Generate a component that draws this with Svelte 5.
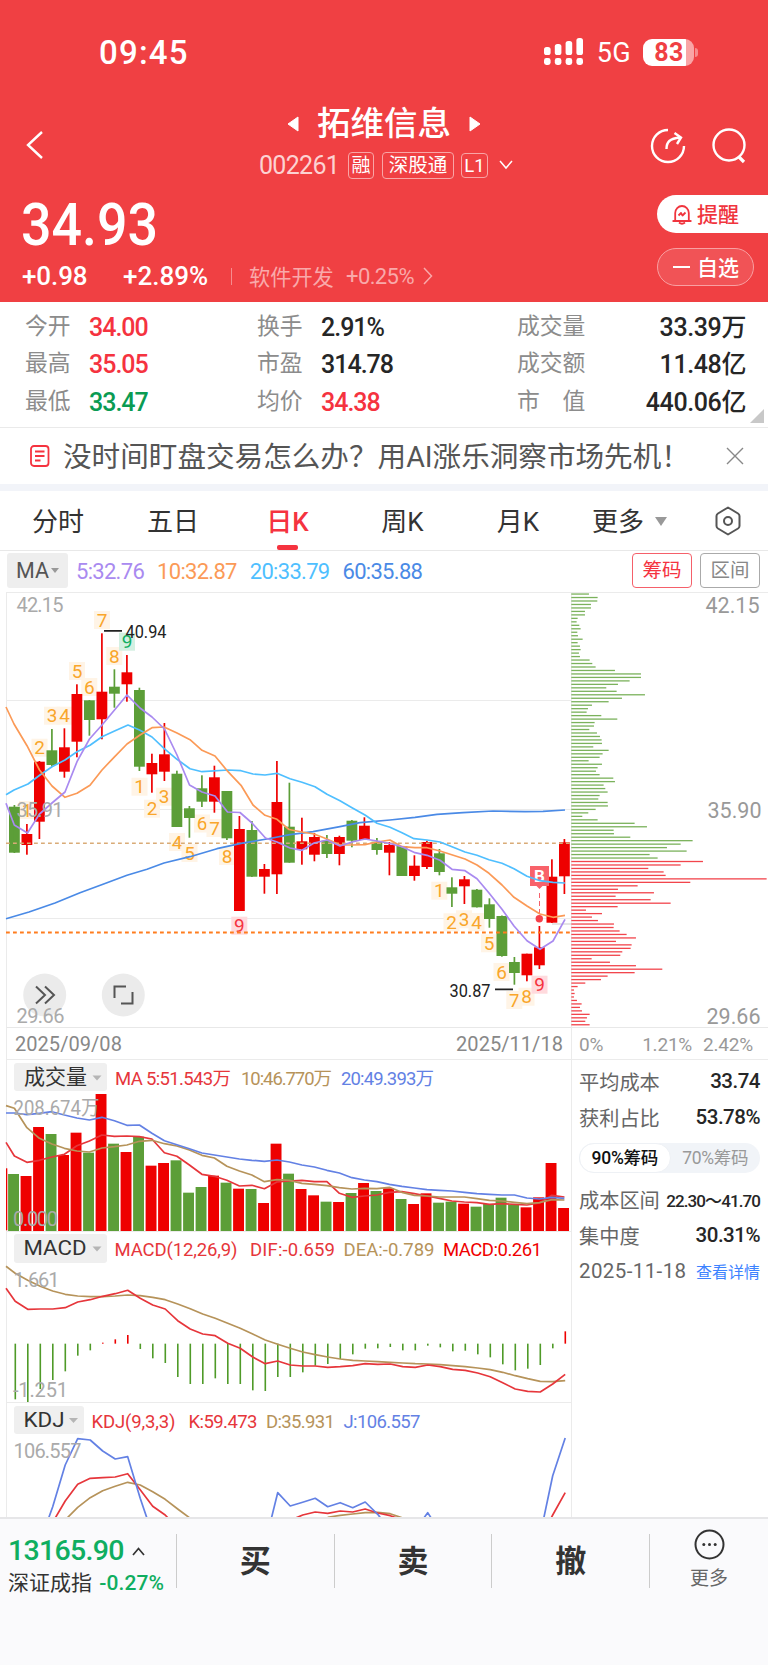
<script>
  // Header quote data
  const quotes = [
    { label: '今开', value: '34.00', tone: 'up' },
    { label: '换手', value: '2.91%' },
    { label: '成交量', value: '33.39万' },
    { label: '最高', value: '35.05', tone: 'up' },
    { label: '市盈', value: '314.78' },
    { label: '成交额', value: '11.48亿' },
    { label: '最低', value: '33.47', tone: 'down' },
    { label: '均价', value: '34.38', tone: 'up' },
    { label: '市　值', value: '440.06亿' }
  ];

  const tabs = ['分时', '五日', '日K', '周K', '月K'];
  let activeTab = '日K';
  let range = '90';

  const step = 12.5;
  const colX = (i) => 14.4 + i * step;

  // Candles: [rising, body top, body bottom, high, low]
  const candles = [
    [0, 806.7, 852.7, 805, 853], [1, 834, 845, 824, 854.7], [1, 761.7, 821.7, 761, 839],
    [0, 750.3, 765, 729, 767], [1, 747.3, 771.7, 728.3, 777.7], [1, 694, 741.7, 684.3, 757.3],
    [0, 700.3, 720, 700, 735.7], [1, 691.7, 719.3, 633.3, 739.3], [0, 686.7, 693.7, 669.3, 707.7],
    [1, 672.3, 684.3, 655, 701.7], [0, 690, 766.7, 687.7, 771], [1, 763, 774.3, 753.7, 792.7],
    [1, 754.3, 771.7, 723, 781], [0, 773.7, 827, 770.7, 827], [0, 808.3, 818, 806, 837.7],
    [0, 788.3, 801.7, 775.3, 807], [1, 777.3, 801.7, 765.7, 812.7], [0, 791, 838.3, 791, 840],
    [1, 829, 911, 816, 911], [0, 830, 876.7, 821, 877], [1, 869, 876.7, 864, 893.7],
    [1, 802, 874.3, 761, 894], [0, 826.7, 862.7, 782.7, 862.7], [1, 841.3, 849.3, 817.7, 864.7],
    [1, 837, 854.7, 833, 861.3], [0, 840.7, 854, 835, 858], [1, 837, 854, 835.7, 865.3],
    [0, 820.7, 840.7, 820, 847.3], [1, 825.7, 840, 817.3, 840], [0, 841.7, 850, 838, 854.7],
    [1, 845, 852.7, 842, 875.3], [0, 846, 876, 846, 876], [1, 865.7, 876, 855.3, 880.7],
    [1, 842, 867, 840.7, 869], [0, 853.3, 872, 849, 875.3], [0, 887.3, 893.7, 877.3, 907],
    [1, 879.3, 886.3, 876, 904], [0, 889.7, 907.3, 889, 907.5], [0, 904.3, 919, 898.3, 927.7],
    [0, 916, 956, 915.5, 956.7], [0, 962, 973, 957, 984.7], [1, 953.7, 975.3, 953.7, 981.3],
    [1, 947.3, 965.3, 926, 969], [1, 876.7, 922.7, 859.3, 923], [1, 842.3, 876.3, 839, 894]
  ];

  const maLines = [
    {
      color: '#4a8ae6',
      points: '6,918.7 29,912 55,903 80,892.7 103,884.3 127,875.3 147,869.3 164,863 190,856.7 217,848.7 241,843.3 267,839 290,834.7 313,831.7 340,826.7 360,822.7 390,820 415,817.3 437,814.3 463,812.7 493,811 525,811.7 543,811.3 565,810'
    },
    {
      color: '#4fbfff',
      points: '6,794.7 14,790 28,784 40,775 52,766.7 65,760 77,751.7 90,745.3 102,736.7 114,731.3 128,725 140,730.3 152,737 164,748.3 177,759.3 190,768.7 202,771.7 228,770 241,770.7 253,774 265,775 277,773.3 290,778.7 302,782.3 315,786.7 327,794.3 340,800.7 352,807.7 365,815 377,823.3 390,827.3 402,832.7 414,838.7 427,840 440,842 452,846.7 465,852 477,855.3 489,859.7 502,863.3 514,868.7 527,876.3 540,880.7 553,882.3 565,883'
    },
    {
      color: '#fb9a57',
      points: '6,707 14,724 27,745.7 39.5,770 52,786 65,797.3 77,793.3 90,785.3 102,770 114,757.3 127,744 140,735 152,727.7 164,727 177,733 190,739.7 202,750.3 215,756 228,771.7 241,785.3 253,805 265,815.3 277,819.3 289,829.5 302,832 314,834 327,839 340,845 352,845 365,844.7 377,842 390,840 402,846.7 415,847.7 427,847.7 440,851 465,859 477,865 489,873.3 502,885 514,897.3 527,906 540,914 553,917.3 565,915.3'
    },
    {
      color: '#a98af0',
      points: '6,803.3 14.3,825 27.5,833 39.5,814 52,803 65,792 77,761.7 89.5,739 102,725 114.5,710 127,695 140,708 152,717 164.5,729 177,755 189.5,785 202,792 215,796 227.5,812 240,812.5 252,823 265.5,838 277,842 290,848 302,850.3 314,843 327,840 340,846 352,842 365,839 377,841 390,843.5 402,846.7 415,852.7 427,855.3 440,860.3 452,869.3 465,870.7 477,878.7 489,893 502,909.3 514,926 527,940.7 540,949.3 553,941 565,919.3'
    }
  ];

  // Nine-turn markers: [digit, x, y, tone]
  const turns = [
    [1, 27, 810], [2, 39.5, 747.7], [3, 52, 715.7], [4, 64.5, 715.7], [5, 77, 671], [6, 89.3, 687],
    [7, 102, 620], [8, 114.3, 656], [9, 127, 641.7, 'green'],
    [1, 139.5, 786.7], [2, 152, 808.7], [3, 164, 796.7], [4, 177, 842], [5, 189.5, 853],
    [6, 202, 823.5], [7, 214.5, 828], [8, 227, 856], [9, 239.3, 925.7, 'red'],
    [1, 439.3, 890.7], [2, 451.5, 922.3], [3, 464, 919.3], [4, 476.5, 922], [5, 489, 943.3],
    [6, 501.5, 972], [7, 514.3, 1000], [8, 526.5, 996.7], [9, 539.5, 984.7, 'red']
  ];

  // Chip distribution, widths in thirds of a pixel
  const chips = [
    87, 113, 112, 93, 93, 75, 75, 53, 50, 58, 62, 52, 54, 68, 53, 60, 62, 57, 60, 89, 97, 107, 165,
    243, 243, 209, 174, 139, 170, 255, 186, 146, 96, 84, 80, 124, 172, 104, 102, 88, 111, 120, 125,
    126, 100, 146, 128, 119, 86, 126, 113, 108, 119, 160, 165, 131, 136, 143, 119, 115, 143, 144,
    107, 85, 67, 113, 224, 261, 161, 162, 211, 398, 362, 321, 380, 269, 293, 429, 362, 265, 311,
    317, 620, 391, 233, 174, 282, 167, 272, 332, 173, 78, 126, 96, 114, 162, 161, 179, 200, 228,
    168, 215, 212, 187, 181, 95, 150, 228, 307, 224, 143, 123, 76, 53, 42, 44, 42, 51, 65, 60, 66,
    89, 81, 76, 89
  ];
  const profitStart = 77;

  const volumes = [
    357, 363, 216, 237, 300, 233, 293, 117, 266, 291, 245, 332, 324, 316, 413, 396, 362, 383, 401,
    402, 444, 266, 356, 402, 421, 440, 441, 414, 384, 408, 400, 432, 447, 415, 443, 440, 446, 455,
    447, 428, 449, 457, 427, 324, 459
  ];
  const volMa = [
    {
      color: '#e6363b',
      start: 262,
      data: [303, 322, 316, 306, 298, 272, 258, 240, 244, 243, 245, 252, 293, 304, 330, 358, 364, 376, 393, 391, 401, 381, 378, 376, 380, 380, 415, 427, 423, 420, 412, 410, 416, 423, 430, 438, 441, 443, 448, 446, 448, 450, 444, 421, 426]
    },
    {
      color: '#b6935a',
      start: 152,
      data: [160, 218, 250, 267, 280, 288, 291, 279, 275, 270, 259, 256, 266, 273, 285, 301, 309, 334, 348, 360, 380, 374, 376, 385, 388, 392, 398, 402, 400, 401, 397, 412, 421, 423, 426, 426, 426, 431, 436, 438, 442, 446, 443, 434, 435]
    },
    {
      color: '#6381e4',
      start: 174,
      data: [174, 179, 175, 170, 180, 189, 195, 187, 197, 211, 210, 235, 257, 269, 281, 294, 300, 306, 312, 316, 319, 315, 321, 330, 336, 346, 354, 368, 375, 380, 388, 394, 399, 404, 406, 408, 412, 416, 418, 420, 420, 429, 432, 427, 430]
    }
  ];

  const hist = [
    343, 351, 312, 285, 259, 212, 196, 173, 163, 150, 192, 220, 234, 276, 297, 297, 280, 297, 297,
    316, 318, 276, 276, 262, 242, 237, 222, 208, 191, 190, 186, 196, 196, 182, 187, 199, 197, 208,
    217, 238, 256, 251, 240, 190, 139
  ];
  const dif = [49, 73, 72, 72, 68, 51, 44, 34, 26, 16, 40, 60, 72, 107, 132, 147, 152, 175, 190, 216, 236, 228, 240, 243, 243, 247, 245, 242, 236, 238, 237, 245, 247, 240, 245, 253, 256, 264, 275, 293, 312, 319, 321, 297, 268];
  const dea = [-35, -14, 4, 18, 28, 33, 35, 35, 33, 30, 32, 37, 44, 57, 71, 87, 100, 115, 130, 147, 165, 178, 190, 201, 209, 216, 222, 226, 228, 230, 232, 234, 236, 237, 239, 242, 245, 249, 254, 262, 272, 281, 289, 290, 287];

  // KDJ segments: first column index plus values
  const kdj = [
    { color: '#b6935a', from: 4, data: [705, 667, 638, 617, 604, 592, 600, 620, 643, 672, 700] },
    { color: '#b6935a', from: 25, data: [697, 691, 687, 683, 682, 686, 699] },
    { color: '#e6363b', from: 3, data: [712, 648, 598, 580, 578, 576, 566, 614, 664, 690, 730] },
    { color: '#e6363b', from: 22, data: [706, 690, 681, 685, 678, 681, 672, 684, 692, 705] },
    { color: '#e6363b', from: 42, data: [765, 690, 623] },
    { color: '#6381e4', from: 2, data: [770, 665, 540, 461, 465, 498, 522, 515, 640, 750] },
    { color: '#6381e4', from: 20, data: [775, 623, 663, 652, 640, 665, 653, 668, 651, 688, 735] },
    { color: '#6381e4', from: 32, data: [735, 683, 740] },
    { color: '#6381e4', from: 42, data: [750, 572, 459] }
  ];

  const line = (data, base, from = 0, dx = 0) =>
    data.map((v, i) => `${colX(i + from) + dx},${(base + v / 3).toFixed(1)}`).join(' ');
</script>

<div class="page">
  <header>
    <div class="status">
      <span class="clock">09:45</span>
      <div class="status-right">
        <svg width="40" height="28" viewBox="0 0 40 28" fill="#fff">
          {#each [9, 6, 3, 0] as top, i}
            <rect x={i * 10.8} y={top} width="6.6" height={17 - top} rx="2.6" />
            <rect x={i * 10.8} y="20" width="6.6" height="7" rx="2.4" />
          {/each}
        </svg>
        <span class="net">5G</span>
        <div class="battery"><span>83</span></div>
        <i class="nub"></i>
      </div>
    </div>

    <div class="title-bar">
      <svg class="back" width="20" height="32" viewBox="0 0 20 32">
        <path d="M17 3 L3 16 L17 29" />
      </svg>
      <div class="title">
        <div class="name">
          <svg width="12" height="16" viewBox="0 0 12 16"><path d="M11 1v14L1 8z" fill="#fff" stroke="#fff" stroke-linejoin="round" /></svg>
          <h1>拓维信息</h1>
          <svg width="12" height="16" viewBox="0 0 12 16"><path d="M1 1v14L11 8z" fill="#fff" stroke="#fff" stroke-linejoin="round" /></svg>
        </div>
        <div class="code">
          <span class="num">002261</span>
          <span class="tag">融</span>
          <span class="tag wide">深股通</span>
          <span class="tag l1">L1</span>
          <svg width="14" height="10" viewBox="0 0 14 10"><path d="M1 1l6 7 6-7" fill="none" stroke="#fff" stroke-width="1.5" /></svg>
        </div>
      </div>
      <div class="tools">
        <svg width="36" height="36" viewBox="0 0 36 36">
          <path d="M18 2A16 16 0 1 0 34 18" />
          <path d="M16.5 21c0-7 3-10.500 13.500-11.500M24.500 5l6.500 4.500-4 6.500" />
        </svg>
        <svg width="36" height="36" viewBox="0 0 36 36">
          <circle cx="18" cy="17" r="15.500" />
          <path d="M27.500 28.500L33 34" stroke-width="3.200" />
        </svg>
      </div>
    </div>

    <div class="price-area">
      <div>
        <div class="price">34.93</div>
        <div class="change">
          <span class="delta">+0.98</span>
          <span class="delta pct">+2.89%</span>
          <i></i>
          <span class="sector">软件开发</span>
          <span class="sector-pct">+0.25%</span>
          <svg width="10" height="18" viewBox="0 0 10 18"><path d="M1 1l7.500 8L1 17" fill="none" stroke="#f9a9aa" stroke-width="1.500" /></svg>
        </div>
      </div>
      <div class="pills">
        <button class="pill alert">
          <svg width="20" height="21" viewBox="0 0 20 21" fill="none" stroke="#f0343d" stroke-width="1.800" stroke-linejoin="round">
            <path d="M3.200 16V9a6.800 7 0 0 1 13.600 0v7l2 1H1.200zM7 18.500q3 2.500 6 0M6.500 11.500l2.500-2.500 1.500 2.500 3-3" />
          </svg>
          <span>提醒</span>
        </button>
        <button class="pill watch"><b></b><span>自选</span></button>
      </div>
    </div>
  </header>

  <section class="quotes">
    {#each quotes as q}
      <div class="quote">
        <span class="label">{q.label}</span>
        <span class={`value ${q.tone || ''}`}>{q.value}</span>
      </div>
    {/each}
    <i class="corner"></i>
  </section>

  <section class="notice">
    <svg width="20" height="23" viewBox="0 0 20 23" fill="none" stroke="#f5333f" stroke-width="1.800">
      <rect x="1" y="1" width="17.500" height="20" rx="3" />
      <path d="M5 6.500h9.500M5 11h9.500M5 15.500h5.500" />
    </svg>
    <p>没时间盯盘交易怎么办？用AI涨乐洞察市场先机！</p>
    <svg width="18" height="18" viewBox="0 0 18 18"><path d="M1 1l16 16M17 1L1 17" stroke="#888" stroke-width="1.400" /></svg>
  </section>

  <nav>
    {#each tabs as tab}
      <button class={`tab ${tab === activeTab ? 'active' : ''}`} on:click={() => (activeTab = tab)}>{tab}</button>
    {/each}
    <button class="more-tab">更多<i class="tri"></i></button>
    <svg width="28" height="30" viewBox="0 0 28 30" fill="none" stroke="#555" stroke-width="2">
      <path d="M14 1.500L24 7.500Q25.500 8.500 25.500 10v10Q25.500 21.500 24 22.500L14 28.500 4 22.500Q2.500 21.500 2.500 20V10Q2.500 8.500 4 7.500z" stroke-linejoin="round" />
      <circle cx="14" cy="15" r="4" />
    </svg>
  </nav>

  <section class="ma-row">
    <button class="ma-pick">MA<i class="tri small"></i></button>
    <span style="color: #a98af0">5:32.76</span>
    <span style="color: #fb9a57">10:32.87</span>
    <span style="color: #4fbfff">20:33.79</span>
    <span style="color: #4a8ae6">60:35.88</span>
    <div class="modes">
      <button class="on">筹码</button>
      <button>区间</button>
    </div>
  </section>

  <main>
    <div class="charts">
      <!-- Candlestick panel -->
      <svg width="571" height="435" viewBox="0 592 571 435">
        {#each [592.5, 700.5, 809.5, 918.5] as y}
          <path class="grid" d={`M6 ${y}H571`} />
        {/each}
        <path class="grid" d="M6.500 592V1027" />
        {#each turns as [n, x, y, tone]}
          <g class={`turn ${tone || ''}`}>
            <rect x={x - 8} y={y - 9} width="16" height="18" />
            <text {x} y={y + 6.5} text-anchor="middle">{n}</text>
          </g>
        {/each}
        <circle cx="44.700" cy="995" r="21.500" fill="#ebebeb" />
        <circle cx="123.300" cy="995" r="21.500" fill="#ebebeb" />
        <path d="M36 986.500l9 8.500-9 8.500M45 986.500l9 8.500-9 8.500" fill="none" stroke="#555" stroke-width="2" />
        <path d="M126 986.500h-11.500V998M132.500 992v11.500H121" fill="none" stroke="#555" stroke-width="2" />
        {#each candles as [up, top, bottom, high, low], i}
          <g fill={up ? '#ee0000' : '#5c9e38'}>
            <rect x={colX(i) - 5.4} y={top} width="10.800" height={bottom - top} />
            <rect x={colX(i) - 0.85} y={high} width="1.700" height={low - high} />
          </g>
        {/each}
        <path d="M6 843.300H571" stroke="#d9ab77" stroke-width="1.600" stroke-dasharray="3.800 3.200" />
        <path d="M6 932.500H571" stroke="#ff7d1e" stroke-width="1.800" stroke-dasharray="3.800 3.200" />
        <path d="M552 924H571" stroke="#ddd" stroke-width="1.500" />
        <g class="marker">
          <path d="M530 866h19v20h-6.500l-3 3-3-3H530z" fill="#f8626a" />
          <text x="539.500" y="882" text-anchor="middle">B</text>
          <path d="M539.500 893V913" stroke="#f5606a" stroke-dasharray="5 3" />
          <circle cx="539.300" cy="918.700" r="3.700" fill="#f5404a" />
        </g>
        {#each maLines as l}
          <polyline points={l.points} stroke={l.color} />
        {/each}
        <path d="M104 630.800H122M495 989.300H513" stroke="#222" stroke-width="1.800" />
        <text class="tip" x="125.500" y="637.500" textLength="41" lengthAdjust="spacingAndGlyphs">40.94</text>
        <text class="tip" x="449.500" y="996.500" textLength="41" lengthAdjust="spacingAndGlyphs">30.87</text>
        <text class="axis" x="16.500" y="612" textLength="47">42.15</text>
        <text class="axis" x="16.500" y="817" textLength="47">35.91</text>
        <text class="axis" x="16.500" y="1022.500" textLength="48">29.66</text>
      </svg>

      <div class="dates"><span>2025/09/08</span><span>2025/11/18</span></div>

      <!-- Volume panel -->
      <svg width="571" height="172" viewBox="0 1059 571 172">
        <path class="grid" d="M6.500 1059V1231M6 1059.500H571" />
        <rect class="pick" x="14" y="1063" width="93" height="28" rx="3" />
        <text class="pick-text" x="24" y="1083.500" textLength="63">成交量</text>
        <path class="arrow" d="M92.500 1075.500h9l-4.500 5z" />
        <g class="legend">
          <text x="115" y="1084.500" fill="#e6363b" textLength="116">MA 5:51.543万</text>
          <text x="241" y="1084.500" fill="#b6935a" textLength="91">10:46.770万</text>
          <text x="341" y="1084.500" fill="#6381e4" textLength="93">20:49.393万</text>
        </g>
        <rect x="6" y="1168.300" width="1.300" height="62" fill="#ee0000" />
        {#each volumes as v, i}
          <rect x={8.1 + i * step} y={1055 + v / 3} width="10.900" height={176.3 - v / 3} fill={candles[i][0] ? '#ee0000' : '#5c9e38'} />
        {/each}
        {#each volMa as l}
          <polyline points={`6,${1055 + l.start / 3} ${line(l.data, 1055)}`} stroke={l.color} />
        {/each}
        <text class="axis" x="13.500" y="1115" textLength="86" lengthAdjust="spacingAndGlyphs">208.674万</text>
        <text class="axis" x="13" y="1226" textLength="45">0.000</text>
      </svg>

      <!-- MACD panel -->
      <svg width="571" height="171" viewBox="0 1231 571 171">
        <path class="grid" d="M6.500 1231V1402M6 1231.500H571" />
        <rect class="pick" x="14" y="1234" width="93" height="29" rx="3" />
        <text class="pick-text" x="23.500" y="1255" textLength="63" lengthAdjust="spacingAndGlyphs">MACD</text>
        <path class="arrow" d="M92.500 1246.500h9l-4.500 5z" />
        <g class="legend">
          <text x="114.500" y="1256" fill="#e6363b" textLength="123">MACD(12,26,9)</text>
          <text x="250" y="1256" fill="#e6363b" textLength="85">DIF:-0.659</text>
          <text x="343.500" y="1256" fill="#b6935a" textLength="91">DEA:-0.789</text>
          <text x="443" y="1256" fill="#f00000" textLength="99">MACD:0.261</text>
        </g>
        {#each hist as v, i}
          <rect x={colX(i) + 0.1} y={1285 + Math.min(v, 176) / 3} width="1.600" height={Math.abs(v - 176) / 3} fill={v < 176 ? '#ee0000' : '#4f9a28'} />
        {/each}
        <polyline points={`6,1266.300 ${line(dea, 1285, 0, 0.8)}`} stroke="#b6935a" />
        <polyline points={`6,1288.300 ${line(dif, 1285, 0, 0.8)}`} stroke="#e6363b" />
        <text class="axis" x="13.500" y="1287" textLength="46">1.661</text>
        <text class="axis" x="13" y="1397" textLength="55">-1.251</text>
      </svg>

      <!-- KDJ panel -->
      <svg width="571" height="115" viewBox="0 1402 571 115">
        <path class="grid" d="M6.500 1402V1517M6 1402.500H571" />
        <rect class="pick" x="14" y="1406" width="70" height="28" rx="3" />
        <text class="pick-text" x="23.500" y="1426.500" textLength="41" lengthAdjust="spacingAndGlyphs">KDJ</text>
        <path class="arrow" d="M69 1418h9l-4.500 5z" />
        <g class="legend">
          <text x="91.500" y="1427.500" fill="#e6363b" textLength="84">KDJ(9,3,3)</text>
          <text x="188.500" y="1427.500" fill="#e6363b" textLength="69">K:59.473</text>
          <text x="266" y="1427.500" fill="#b6935a" textLength="69">D:35.931</text>
          <text x="343.500" y="1427.500" fill="#6381e4" textLength="77">J:106.557</text>
        </g>
        {#each kdj as l}
          <polyline points={line(l.data, 1285, l.from, 0.8)} stroke={l.color} />
        {/each}
        <text class="axis" x="13.500" y="1458" textLength="68">106.557</text>
      </svg>
    </div>

    <aside>
      <svg width="197" height="435" viewBox="571 592 197 435">
        <path class="grid" d="M571 592.500H768M571.500 592V1027" />
        {#each chips as c, i}
          <rect x="571.300" y={593.4 + i * 3.4735} width={(c - 34) / 3} height="1.300" fill={i < profitStart ? '#7bb25c' : '#f2454c'} />
        {/each}
        <text class="axis big" x="705.500" y="613" textLength="54">42.15</text>
        <text class="axis big" x="707.500" y="818" textLength="54">35.90</text>
        <text class="axis big" x="706.500" y="1023.500" textLength="54">29.66</text>
      </svg>
      <div class="scale"><span>0%</span><span>1.21%</span><span>2.42%</span></div>
      <div class="stats">
        <div class="stat"><span>平均成本</span><b>33.74</b></div>
        <div class="stat"><span>获利占比</span><b>53.78%</b></div>
        <div class="switch">
          <button class:on={range === '90'} on:click={() => (range = '90')}>90%筹码</button>
          <button class:on={range === '70'} on:click={() => (range = '70')}>70%筹码</button>
        </div>
        <div class="stat"><span>成本区间</span><b class="range">22.30～41.70</b></div>
        <div class="stat"><span>集中度</span><b>30.31%</b></div>
        <div class="stat"><span class="day">2025-11-18</span><a href="#detail">查看详情</a></div>
      </div>
    </aside>
  </main>

  <footer>
    <div class="index">
      <div class="index-value"><span>13165.90</span>
        <svg width="13" height="9" viewBox="0 0 13 9"><path d="M1 8l5.500-6.500L12 8" fill="none" stroke="#333" stroke-width="1.700" /></svg>
      </div>
      <div class="index-name">深证成指 <span>-0.27%</span></div>
    </div>
    <button class="trade">买</button>
    <button class="trade">卖</button>
    <button class="trade">撤</button>
    <button class="more">
      <svg width="31" height="31" viewBox="0 0 31 31">
        <circle cx="15.500" cy="15.500" r="14" fill="none" stroke="#333" stroke-width="2" />
        <circle cx="9.800" cy="15.500" r="1.500" /><circle cx="15.500" cy="15.500" r="1.500" /><circle cx="21.200" cy="15.500" r="1.500" />
      </svg>
      更多
    </button>
  </footer>
</div>

<style>
  .page {
    width: 768px;
    height: 1665px;
    overflow: hidden;
    background: #fff;
    color: #333;
    font-family: Roboto, "Noto Sans CJK SC", sans-serif;
  }

  svg {
    display: block;
    flex: none;
  }

  button {
    border: 0;
    padding: 0;
    margin: 0;
    background: none;
    color: inherit;
    font: inherit;
  }

  header {
    height: 302px;
    background: #f04043;
    color: #fff;
  }

  .status {
    height: 104px;
    box-sizing: border-box;
    padding: 33px 70px 0 99px;
    display: flex;
    justify-content: space-between;
    align-items: flex-start;
  }

  .clock {
    font-size: 33px;
    line-height: 40px;
    font-weight: 500;
    letter-spacing: 1.2px;
  }

  .status-right {
    display: flex;
    align-items: center;
    padding-top: 5px;
  }

  .net {
    margin: 2px 12px 0 13px;
    font-size: 27px;
    line-height: 26px;
    letter-spacing: 0.3px;
  }

  .battery {
    width: 51px;
    height: 27px;
    border-radius: 9px;
    background: linear-gradient(90deg, #fff 43px, #f9a5a6 43px);
    color: #f04043;
    font-size: 25px;
    line-height: 28px;
    font-weight: 700;
    text-align: center;
  }

  .battery span {
    letter-spacing: 0.5px;
    margin-left: 1px;
  }

  .nub {
    width: 3px;
    height: 9px;
    margin-left: 1px;
    border-radius: 0 3px 3px 0;
    background: #f78b8d;
  }

  .title-bar {
    height: 84px;
    display: grid;
    grid-template-columns: 180px 1fr 180px;
  }

  .back {
    margin: 25px 0 0 25px;
    fill: none;
    stroke: #fff;
    stroke-width: 2.4;
  }

  .name {
    display: flex;
    justify-content: center;
    align-items: center;
    gap: 18px;
    height: 39px;
  }

  h1 {
    margin: 0;
    font-size: 33.5px;
    line-height: 39px;
    font-weight: 500;
  }

  .code {
    display: flex;
    align-items: center;
    height: 28px;
    margin: 8px 0 0 79px;
  }

  .code .num {
    width: 89px;
    font-size: 25px;
    letter-spacing: -0.7px;
    line-height: 28px;
    padding-top: 2px;
    color: #fcd2d2;
  }

  .tag {
    box-sizing: border-box;
    width: 26px;
    height: 27px;
    margin-right: 8px;
    border: 1px solid #f9a5a6;
    border-radius: 4px;
    font-size: 19px;
    line-height: 25px;
    text-align: center;
  }

  .tag.wide {
    width: 72px;
    margin-right: 7px;
    font-size: 19.5px;
  }

  .tag.l1 {
    width: 27px;
    height: 25px;
    margin-right: 11px;
    line-height: 24px;
    font-size: 18.5px;
  }

  .tools {
    display: flex;
    gap: 25px;
    padding: 24px 0 0 62px;
  }

  .tools svg {
    fill: none;
    stroke: #fff;
    stroke-width: 2.4;
  }

  .price-area {
    height: 114px;
    display: flex;
    justify-content: space-between;
  }

  .price {
    margin: 4px 0 0 21px;
    height: 70px;
    width: 170px;
    font-size: 59px;
    line-height: 66px;
    font-weight: 500;
    transform: scaleX(0.91);
    transform-origin: left;
  }

  .change {
    display: flex;
    align-items: center;
    height: 28px;
    margin-left: 22px;
  }

  .delta {
    width: 101px;
    font-size: 26px;
    font-weight: 500;
    letter-spacing: -0.1px;
  }

  .delta.pct {
    width: 108px;
    letter-spacing: 0;
  }

  .change i {
    width: 1px;
    height: 17px;
    margin-right: 17px;
    background: #f68c8e;
  }

  .sector {
    width: 97px;
    margin-top: -2px;
    font-size: 21.2px;
    color: #f9a9aa;
  }

  .sector-pct {
    width: 77px;
    font-size: 22px;
    letter-spacing: -0.6px;
    color: #f9a9aa;
  }

  .pills {
    width: 111px;
    padding-top: 7px;
    display: flex;
    flex-direction: column;
    gap: 15px;
  }

  .pill {
    box-sizing: border-box;
    height: 38px;
    display: flex;
    align-items: center;
    font-size: 21px;
    font-weight: 500;
  }

  .pill span {
    margin-top: -3px;
  }

  .alert {
    padding-left: 15px;
    gap: 5px;
    border-radius: 19px 0 0 19px;
    background: #fff;
    color: #f0343d;
  }

  .watch {
    width: 97px;
    padding-left: 15px;
    gap: 7px;
    border: 1px solid #f9a0a2;
    border-radius: 19px;
    background: #f15356;
  }

  .watch b {
    width: 17px;
    height: 2px;
    background: #fff;
  }

  .quotes {
    position: relative;
    box-sizing: border-box;
    height: 126px;
    padding: 7px 22px 0 25px;
    border-bottom: 1px solid #eaeaea;
    display: grid;
    grid-template-columns: 232px 260px 1fr;
    grid-auto-rows: 37.5px;
  }

  .quote {
    display: flex;
    align-items: center;
  }

  .label {
    width: 64px;
    font-size: 22.8px;
    line-height: 32px;
    color: #8c8c8c;
    white-space: nowrap;
    margin-top: -2px;
  }

  .quote:nth-child(3n) {
    justify-content: space-between;
  }

  .value {
    font-size: 25px;
    line-height: 32px;
    font-weight: 500;
    letter-spacing: -1px;
    color: #262626;
  }

  .quote:nth-child(3n) .value {
    letter-spacing: -0.4px;
  }

  .value.up {
    color: #f5333f;
  }

  .value.down {
    color: #0a9b53;
  }

  .corner {
    position: absolute;
    right: 4px;
    bottom: 4px;
    border-left: 14px solid transparent;
    border-bottom: 14px solid #c8c8c8;
  }

  .notice {
    height: 56px;
    padding: 0 24px 0 30px;
    border-bottom: 7px solid #f2f4f9;
    display: flex;
    align-items: center;
  }

  .notice p {
    flex: 1;
    margin: 2px 0 0 13px;
    font-size: 28.6px;
    line-height: 40px;
    color: #555;
    white-space: nowrap;
  }

  nav {
    height: 59px;
    border-bottom: 1px solid #e8e8e8;
    display: grid;
    grid-template-columns: 116px 114px 115px 115px 116px 138px 28px;
    align-items: center;
    font-size: 26px;
  }

  .tab {
    position: relative;
    height: 59px;
    padding-bottom: 2px;
  }

  .tab.active {
    color: #f5333f;
    font-weight: 500;
  }

  .tab.active::after {
    content: "";
    position: absolute;
    left: 47px;
    bottom: 0;
    width: 21px;
    height: 5px;
    border-radius: 2px;
    background: #f5333f;
  }

  .more-tab {
    display: flex;
    align-items: center;
    padding: 0 0 2px 16px;
  }

  .tri {
    margin: 3px 0 0 11px;
    border: 6.5px solid transparent;
    border-top: 9px solid #999;
    border-bottom: 0;
  }

  .tri.small {
    margin: 0 0 0 2px;
    border-width: 5px 4.5px 0;
  }

  .ma-row {
    height: 41px;
    box-sizing: border-box;
    padding: 2px 8px 0 7px;
    display: flex;
    align-items: flex-start;
    font-size: 22px;
    line-height: 37px;
    letter-spacing: -0.7px;
  }

  .ma-row span {
    margin-right: 13px;
  }

  .ma-pick {
    width: 61px;
    height: 35px;
    margin-right: 8px;
    display: flex;
    align-items: center;
    justify-content: center;
    border-radius: 3px;
    background: #eee;
    color: #555;
    font-size: 21.5px;
    letter-spacing: 0;
  }

  .modes {
    margin-left: auto;
    display: flex;
    gap: 8px;
  }

  .modes button {
    box-sizing: border-box;
    width: 60px;
    height: 35px;
    border: 1px solid #aaa;
    border-radius: 4px;
    color: #888;
    font-size: 19.5px;
    line-height: 33px;
    letter-spacing: 0;
  }

  .modes .on {
    border-color: #f5606a;
    color: #f5333f;
  }

  main {
    display: flex;
    height: 925px;
  }

  .charts {
    width: 571px;
  }

  .grid {
    fill: none;
    stroke: #ebebeb;
  }

  polyline {
    fill: none;
    stroke-width: 1.7;
    stroke-linejoin: round;
  }

  .turn rect {
    fill: #fff4e6;
  }

  .turn text {
    fill: #f9a62b;
    font-size: 19px;
  }

  .turn.green rect {
    fill: #d3f0e2;
  }

  .turn.green text {
    fill: #12ae62;
  }

  .turn.red rect {
    fill: #ffdadd;
  }

  .turn.red text {
    fill: #f5333f;
  }

  .marker text {
    fill: #fff;
    font-size: 17px;
    font-weight: 700;
  }

  .tip {
    fill: #222;
    font-size: 18px;
  }

  .axis {
    fill: #aaa;
    font-size: 20px;
  }

  .axis.big {
    fill: #999;
    font-size: 21.5px;
  }

  .pick {
    fill: #efefef;
  }

  .pick-text {
    fill: #333;
    font-size: 21px;
  }

  .arrow {
    fill: #b5b5b5;
  }

  .legend {
    font-size: 18.5px;
  }

  .dates,
  .scale {
    box-sizing: border-box;
    height: 32px;
    border-top: 1px solid #e8e8e8;
    display: flex;
    justify-content: space-between;
    line-height: 33px;
    color: #888;
  }

  .dates {
    margin-left: 6px;
    padding: 0 8px;
    border-left: 1px solid #ebebeb;
    font-size: 20px;
    letter-spacing: 0.05px;
  }

  aside {
    width: 197px;
    box-sizing: border-box;
  }

  .scale {
    padding: 0 15px 0 7px;
    border-left: 1px solid #ebebeb;
    color: #999;
    font-size: 19px;
    letter-spacing: -0.2px;
  }

  .scale span:nth-child(2) {
    margin-left: 28px;
  }

  .stats {
    box-sizing: border-box;
    height: 458px;
    padding: 3px 8px 0 7px;
    border-top: 1px solid #ebebeb;
    border-left: 1px solid #ebebeb;
  }

  .stat {
    display: flex;
    justify-content: space-between;
    align-items: center;
    height: 36px;
    font-size: 20.2px;
    color: #666;
    white-space: nowrap;
  }

  .stat b {
    font-size: 20.5px;
    font-weight: 500;
    color: #262626;
    letter-spacing: -0.5px;
  }

  .stat .range {
    font-size: 17px;
    letter-spacing: -0.9px;
  }

  .stat .day {
    font-size: 20.5px;
    letter-spacing: 0.4px;
  }

  .stat a {
    font-size: 16px;
    color: #3d83ff;
    text-decoration: none;
  }

  .switch {
    height: 30px;
    margin: 8px 0 8px;
    border-radius: 15px;
    display: flex;
    background: #f1f4f8;
  }

  .switch button {
    flex: 1;
    border-radius: 15px;
    font-size: 17.5px;
    line-height: 28px;
    color: #999;
    letter-spacing: -0.3px;
  }

  .switch .on {
    border: 1px solid #eef1f5;
    background: #fff;
    color: #111;
    font-weight: 500;
  }

  footer {
    height: 148px;
    box-sizing: border-box;
    padding-top: 15px;
    border-top: 2px solid #e6e6e8;
    background: #fafafc;
    display: flex;
    align-items: flex-start;
  }

  .index {
    width: 176px;
    box-sizing: border-box;
    padding-left: 8px;
    white-space: nowrap;
  }

  .index-value {
    display: flex;
    align-items: center;
    gap: 8px;
    height: 34px;
    font-size: 28.5px;
    font-weight: 500;
    letter-spacing: -0.7px;
    color: #0fae60;
  }

  .index-value span {
    margin-top: -2px;
  }

  .index-name {
    font-size: 21px;
    line-height: 30px;
    color: #333;
  }

  .index-name span {
    margin-left: 2px;
    font-weight: 500;
    letter-spacing: 0.1px;
    color: #0fae60;
  }

  .trade {
    box-sizing: border-box;
    width: 157.8px;
    height: 54px;
    border-left: 1px solid #ccc;
    font-size: 31px;
    line-height: 56px;
    font-weight: 700;
  }

  .more {
    width: 119px;
    height: 54px;
    border-left: 1px solid #ccc;
    display: flex;
    flex-direction: column;
    align-items: center;
    font-size: 19px;
    line-height: 37px;
    color: #666;
  }

  .more svg {
    margin-top: -5px;
    fill: #333;
  }
</style>
